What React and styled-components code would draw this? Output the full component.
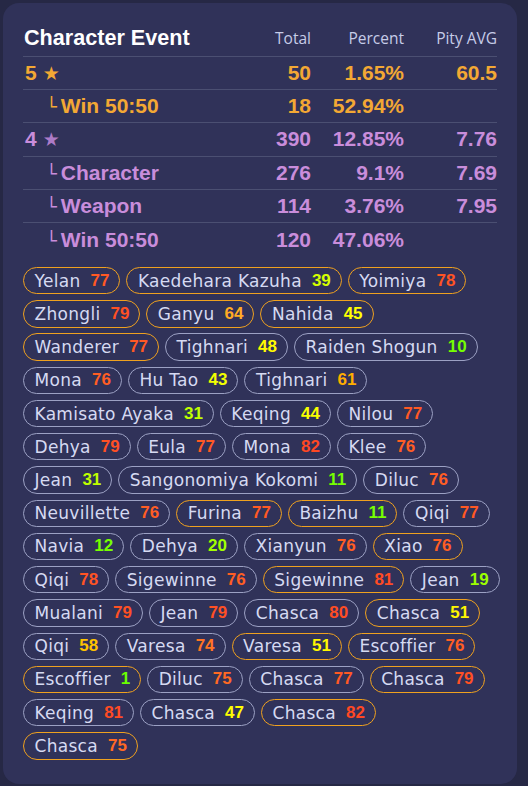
import styled, { createGlobalStyle } from 'styled-components';

const GlobalStyle = createGlobalStyle`
  html, body {
    margin: 0;
    padding: 0;
    background: #262845;
  }
  body {
    font-family: 'Liberation Sans', Arial, sans-serif;
  }
`;

const Card = styled.div`
  box-sizing: border-box;
  width: 514px;
  margin: 3px;
  padding: 17px 20px 24px;
  background: #303259;
  border-radius: 16px;
`;

const Row = styled.div`
  box-sizing: border-box;
  display: grid;
  grid-template-columns: 1fr 70px 93px 93px;
  align-items: center;
  height: ${(p) => (p.$head ? '36.7px' : '33.3px')};
  border-bottom: ${(p) => (p.$last ? 'none' : '1px solid #4b4f72')};
  font-family: 'Liberation Sans', Arial, sans-serif;
  font-weight: 700;
  font-size: 21px;
  color: ${(p) => p.$color || '#fff'};
`;

const Title = styled.div`
  padding-left: 1px;
  color: #ffffff;
  font-size: 21.6px;
  font-weight: 700;
`;

const HeadCell = styled.div`
  text-align: right;
  font-family: 'Open Sans', sans-serif;
  font-size: 15.5px;
  font-weight: 500;
  color: #c6cce8;
`;

const Num = styled.div`
  text-align: right;
`;

const Label = styled.div`
  display: flex;
  align-items: baseline;
  padding-left: ${(p) => (p.$sub ? '23px' : '2px')};
`;

const Star = styled.span`
  font-family: 'DejaVu Sans', sans-serif;
  font-size: 19px;
  margin-left: 6px;
  color: ${(p) => p.$color};
`;

const Branch = styled.span`
  font-family: 'DejaVu Sans', sans-serif;
  font-weight: 400;
  font-size: 18px;
  margin-right: 4px;
`;

const Chips = styled.div`
  display: flex;
  flex-direction: column;
  gap: 5.95px;
  margin-top: 10.5px;
`;

const ChipLine = styled.div`
  display: flex;
  gap: 6px;
`;

const Chip = styled.div`
  box-sizing: border-box;
  display: flex;
  align-items: center;
  height: 27.3px;
  padding: 0 10px 0 10.5px;
  border: 1px solid ${(p) => (p.$won ? '#efa11f' : '#9ca1c4')};
  border-radius: 14px;
  white-space: nowrap;
`;

const ChipName = styled.span`
  font-family: 'DejaVu Sans', sans-serif;
  font-size: 17px;
  letter-spacing: 0.3px;
  color: #d6daf2;
`;

const ChipPity = styled.span`
  margin-left: 10px;
  font-family: 'Liberation Sans', Arial, sans-serif;
  font-weight: 700;
  font-size: 17px;
  color: ${(p) => p.$color};
`;

const ORANGE = '#f3a834';
const PURPLE = '#c98ddb';

const stats = [
  { label: '5', star: true, total: 50, percent: '1.65%', pity: '60.5', color: ORANGE, starColor: ORANGE },
  { label: 'Win 50:50', sub: true, total: 18, percent: '52.94%', pity: '', color: ORANGE },
  { label: '4', star: true, total: 390, percent: '12.85%', pity: '7.76', color: PURPLE, starColor: '#ad7bc7' },
  { label: 'Character', sub: true, total: 276, percent: '9.1%', pity: '7.69', color: PURPLE },
  { label: 'Weapon', sub: true, total: 114, percent: '3.76%', pity: '7.95', color: PURPLE },
  { label: 'Win 50:50', sub: true, total: 120, percent: '47.06%', pity: '', color: PURPLE },
];

// o = won the 50:50 (orange border), g = lost
const pulls = [
  [['Yelan', 77, 'o'], ['Kaedehara Kazuha', 39, 'o'], ['Yoimiya', 78, 'o']],
  [['Zhongli', 79, 'o'], ['Ganyu', 64, 'o'], ['Nahida', 45, 'o']],
  [['Wanderer', 77, 'o'], ['Tighnari', 48, 'g'], ['Raiden Shogun', 10, 'g']],
  [['Mona', 76, 'g'], ['Hu Tao', 43, 'g'], ['Tighnari', 61, 'g']],
  [['Kamisato Ayaka', 31, 'g'], ['Keqing', 44, 'g'], ['Nilou', 77, 'g']],
  [['Dehya', 79, 'g'], ['Eula', 77, 'g'], ['Mona', 82, 'g'], ['Klee', 76, 'g']],
  [['Jean', 31, 'g'], ['Sangonomiya Kokomi', 11, 'g'], ['Diluc', 76, 'g']],
  [['Neuvillette', 76, 'g'], ['Furina', 77, 'o'], ['Baizhu', 11, 'o'], ['Qiqi', 77, 'g']],
  [['Navia', 12, 'g'], ['Dehya', 20, 'g'], ['Xianyun', 76, 'g'], ['Xiao', 76, 'o']],
  [['Qiqi', 78, 'g'], ['Sigewinne', 76, 'g'], ['Sigewinne', 81, 'o'], ['Jean', 19, 'g']],
  [['Mualani', 79, 'g'], ['Jean', 79, 'g'], ['Chasca', 80, 'g'], ['Chasca', 51, 'o']],
  [['Qiqi', 58, 'g'], ['Varesa', 74, 'g'], ['Varesa', 51, 'o'], ['Escoffier', 76, 'o']],
  [['Escoffier', 1, 'o'], ['Diluc', 75, 'g'], ['Chasca', 77, 'g'], ['Chasca', 79, 'o']],
  [['Keqing', 81, 'g'], ['Chasca', 47, 'g'], ['Chasca', 82, 'o']],
  [['Chasca', 75, 'o']],
];

const hueStops = [
  [1, 95], [12, 92], [20, 82], [31, 75], [39, 70], [45, 60], [51, 58],
  [58, 46], [61, 41], [64, 37], [74, 22], [76, 16], [79, 12], [82, 10],
];

function pityColor(n) {
  let h = hueStops[hueStops.length - 1][1];
  for (let i = 0; i < hueStops.length - 1; i++) {
    const [a, ha] = hueStops[i];
    const [b, hb] = hueStops[i + 1];
    if (n <= a) { h = ha; break; }
    if (n <= b) { h = ha + ((n - a) / (b - a)) * (hb - ha); break; }
  }
  const l = h < 40 ? 57 : 50;
  return `hsl(${h.toFixed(1)}, 100%, ${l}%)`;
}

export default function App() {
  return (
    <>
      <GlobalStyle />
      <Card>
        <Row $head>
          <Title>Character Event</Title>
          <HeadCell>Total</HeadCell>
          <HeadCell>Percent</HeadCell>
          <HeadCell>Pity AVG</HeadCell>
        </Row>
        {stats.map((s, i) => (
          <Row key={i} $color={s.color} $last={i === stats.length - 1}>
            <Label $sub={s.sub}>
              {s.sub && <Branch>└</Branch>}
              {s.label}
              {s.star && <Star $color={s.starColor}>★</Star>}
            </Label>
            <Num>{s.total}</Num>
            <Num>{s.percent}</Num>
            <Num>{s.pity}</Num>
          </Row>
        ))}
        <Chips>
          {pulls.map((line, i) => (
            <ChipLine key={i}>
              {line.map(([name, pity, res], j) => (
                <Chip key={j} $won={res === 'o'}>
                  <ChipName>{name}</ChipName>
                  <ChipPity $color={pityColor(pity)}>{pity}</ChipPity>
                </Chip>
              ))}
            </ChipLine>
          ))}
        </Chips>
      </Card>
    </>
  );
}
